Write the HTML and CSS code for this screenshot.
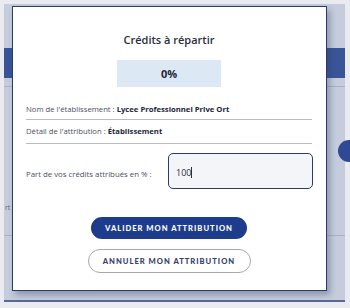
FILE: index.html
```html
<!DOCTYPE html>
<html lang="fr">
<head>
<meta charset="utf-8">
<link rel="stylesheet" href="styles.css">
</head>
<body>
<div class="screen">
  <div class="page">
    <div class="navbar"></div>
    <div class="page-line first"></div>
    <div class="page-text">rt</div>
    <div class="page-line"></div>
    <div class="fab"></div>
  </div>
  <div class="modal">
    <h1 class="title">Crédits à répartir</h1>
    <div class="percent">0%</div>
    <div class="row row-name">Nom de l'établissement : <b>Lycee Professionnel Prive Ort</b></div>
    <div class="row row-detail">Détail de l'attribution : <b>Établissement</b></div>
    <div class="field">
      <label class="field-label">Part de vos crédits attribués en % :</label>
      <div class="input">100<span class="caret"></span></div>
    </div>
    <div class="actions">
      <button class="btn btn-primary">VALIDER MON ATTRIBUTION</button>
      <button class="btn btn-outline">ANNULER MON ATTRIBUTION</button>
    </div>
  </div>
</div>
</body>
</html>
```
FILE: styles.css
```css
* { box-sizing: border-box; }
html, body { margin: 0; }
body {
  width: 350px;
  height: 308px;
  overflow: hidden;
  background: #e9ebf1;
  padding: 4px 5px 0 4px;
  font-family: "Open Sans", "Liberation Sans", sans-serif;
}
.screen {
  position: relative;
  height: 298px;
  background: #c5ccdb;
  border-bottom: 2px solid #5a6894;
}
.page {
  position: relative;
  height: 100%;
  padding-top: 44px;
}
.navbar {
  height: 30px;
  background: #3a5597;
}
.page-line {
  height: 1px;
  background: #aab2c6;
}
.page-line.first { margin-top: 8px; }
.page-text {
  margin-top: 116px;
  padding-left: 1px;
  font-size: 7px;
  line-height: 10px;
  color: #5d6a8d;
  height: 32px;
}
.fab {
  position: absolute;
  right: -15px;
  top: 136px;
  width: 22px;
  height: 22px;
  border-radius: 50%;
  background: #2d4a93;
}
.modal {
  position: absolute;
  left: 8px;
  top: 2px;
  width: 315px;
  height: 285px;
  background: #fff;
  border: 1.5px solid #2f3a66;
  box-shadow: 3px 4px 6px rgba(40, 52, 95, 0.35);
  padding: 26px 14px 0 13px;
  display: flex;
  flex-direction: column;
}
.title {
  margin: 0;
  text-align: center;
  font-size: 11px;
  line-height: 14px;
  font-weight: 600;
  color: #2b2e3a;
}
.percent {
  align-self: center;
  margin-top: 13px;
  width: 104px;
  height: 27px;
  background: #dde8f5;
  display: flex;
  align-items: center;
  justify-content: center;
  font-size: 11px;
  font-weight: 700;
  color: #23283a;
}
.row {
  font-size: 7.7px;
  line-height: 10px;
  color: #4a4f5e;
  border-bottom: 1px solid #b9bcc4;
}
.row b { color: #22273a; font-weight: 700; }
.row-name { margin-top: 17px; padding-bottom: 5px; }
.row-detail { padding-top: 6px; padding-bottom: 7px; }
.field {
  margin-top: 9px;
  display: flex;
  align-items: center;
}
.field-label {
  flex: 1;
  font-size: 7.8px;
  color: #4a4f5e;
  padding-top: 6px;
}
.input {
  width: 145px;
  height: 36px;
  border: 1.5px solid #2f3a66;
  border-radius: 5px;
  background: #f3f5f9;
  display: flex;
  align-items: center;
  padding-left: 7px;
  padding-top: 2px;
  font-size: 9px;
  color: #2a2f40;
  margin-right: -1px;
}
.caret {
  display: inline-block;
  width: 1px;
  height: 11px;
  background: #2a2f40;
}
.actions {
  margin-top: 28px;
  display: flex;
  flex-direction: column;
  align-items: center;
  gap: 10px;
}
.btn {
  font-family: "Lato", "Liberation Sans", sans-serif;
  font-weight: 900;
  font-size: 7.6px;
  letter-spacing: 1px;
  border-radius: 12px;
  cursor: pointer;
  padding: 0;
}
.btn-primary {
  width: 156px;
  height: 22px;
  background: #1d3c8c;
  color: #fff;
  border: none;
}
.btn-outline {
  width: 163px;
  height: 24px;
  background: #fff;
  color: #33406e;
  border: 1px solid #a4a8b4;
}
```
